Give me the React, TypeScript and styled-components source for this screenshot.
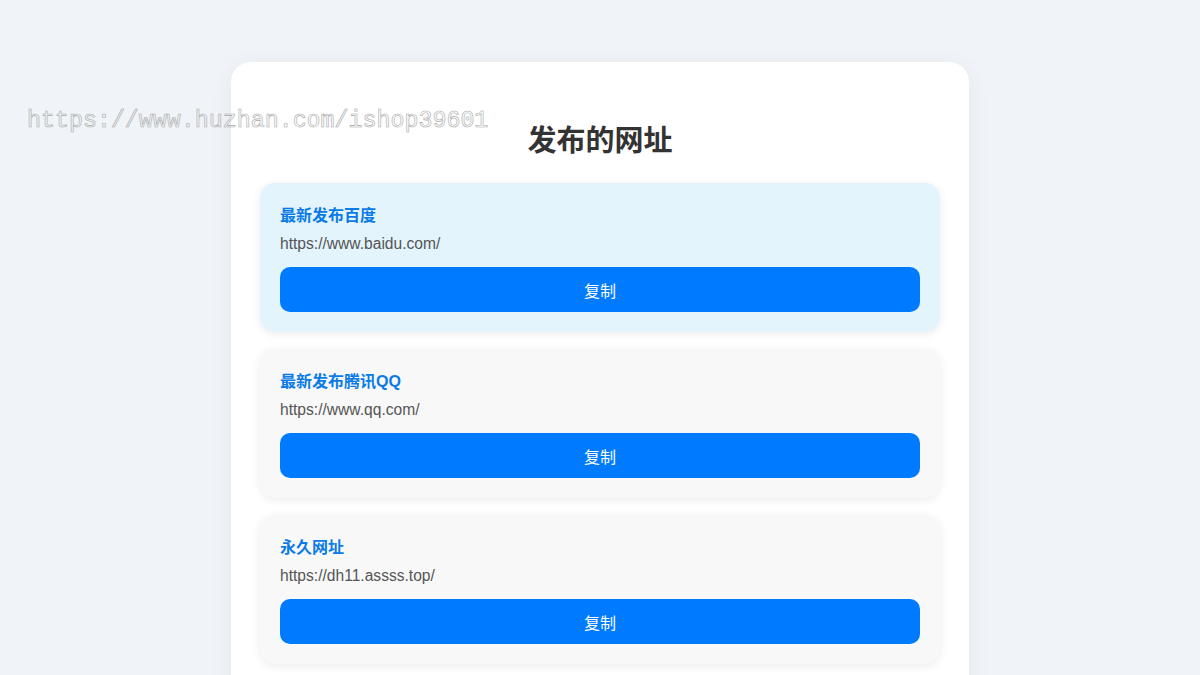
import { createGlobalStyle } from 'styled-components'
import styled from 'styled-components'

const links = [
  { title: '最新发布百度', url: 'https://www.baidu.com/', active: true },
  { title: '最新发布腾讯QQ', url: 'https://www.qq.com/', active: false },
  { title: '永久网址', url: 'https://dh11.assss.top/', active: false },
]

const App = () => {
  return (
    <>
      <GlobalStyle />
      <Page>
        <Watermark>https://www.huzhan.com/ishop39601</Watermark>
        <Container>
          <Title>发布的网址</Title>
          <List>
            {links.map((link) => (
              <Card key={link.url} $active={link.active}>
                <CardTitle>{link.title}</CardTitle>
                <Url>{link.url}</Url>
                <CopyButton type="button">复制</CopyButton>
              </Card>
            ))}
          </List>
        </Container>
      </Page>
    </>
  )
}

const GlobalStyle = createGlobalStyle`
  html, body {
    margin: 0;
    padding: 0;
    background: #f0f4f8;
    font-family: "Liberation Sans", "Noto Sans CJK SC", sans-serif;
  }
`

const Page = styled.div`
  position: relative;
  min-height: 675px;
  padding-top: 62px;
  box-sizing: border-box;
`

const Watermark = styled.div`
  position: absolute;
  left: 27px;
  top: 104px;
  font-family: "Liberation Mono", monospace;
  font-size: 23.3px;
  line-height: 34px;
  color: transparent;
  -webkit-text-stroke: 0.6px #a8a8a8;
  pointer-events: none;
  z-index: 2;
`

const Container = styled.main`
  width: 738px;
  margin: 0 auto;
  background: #fff;
  border-radius: 20px;
  box-shadow: 0 4px 24px rgba(0, 0, 0, 0.06);
  padding: 30px 29px 40px;
  box-sizing: border-box;
`

const Title = styled.h1`
  margin: 32px 0 25px;
  text-align: center;
  font-size: 29px;
  line-height: 34px;
  font-weight: 700;
  color: #333;
`

const List = styled.div`
  display: flex;
  flex-direction: column;
  gap: 17px;
`

const Card = styled.div<{ $active: boolean }>`
  background: ${(props) => (props.$active ? '#e3f4fd' : '#f8f8f8')};
  border-radius: 15px;
  padding: 20px;
  box-shadow: 0 2px 10px rgba(0, 0, 0, 0.08);
  display: flex;
  flex-direction: column;
`

const CardTitle = styled.div`
  margin-top: 2px;
  font-size: 16px;
  line-height: 22px;
  font-weight: 700;
  color: #0a7be6;
`

const Url = styled.div`
  margin-top: 6px;
  font-size: 15.6px;
  line-height: 22px;
  color: #555;
`

const CopyButton = styled.button`
  margin-top: 12px;
  height: 45px;
  border: none;
  border-radius: 10px;
  background: #007bff;
  color: #fff;
  font-family: "Liberation Sans", "Noto Sans CJK SC", sans-serif;
  font-size: 16px;
  cursor: pointer;
`

export default App
